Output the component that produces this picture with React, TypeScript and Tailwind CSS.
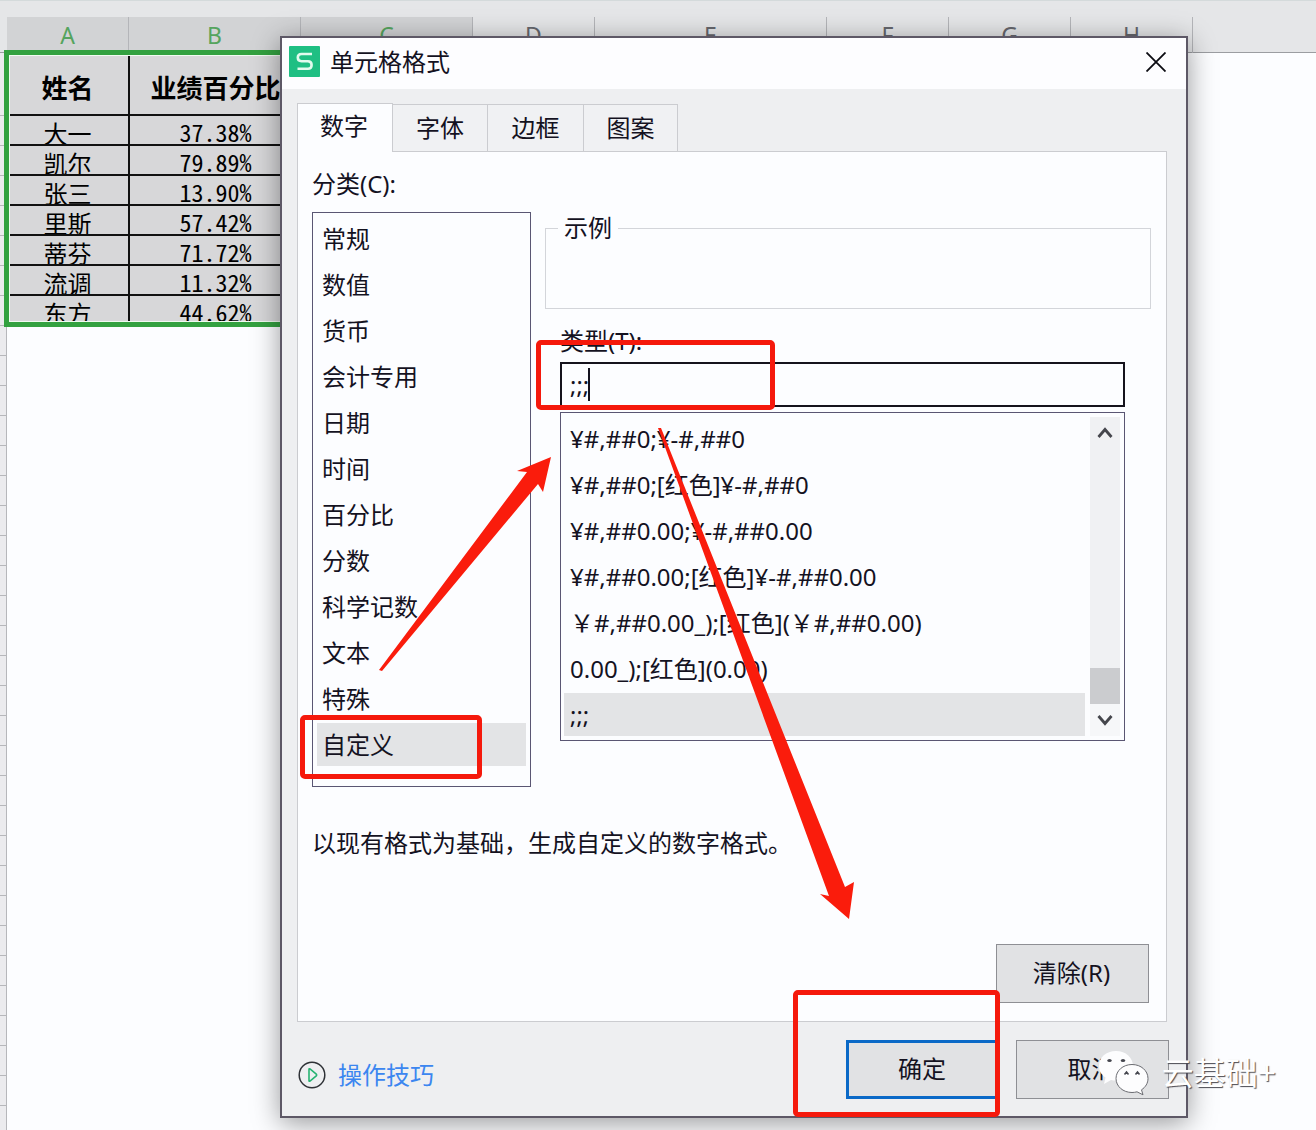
import React, { useState } from 'react';

const COLUMNS = [
  { name: 'A', width: 'w-[122px]', selected: true },
  { name: 'B', width: 'w-[172px]', selected: true },
  { name: 'C', width: 'w-[172px]', selected: true },
  { name: 'D', width: 'w-[122px]', selected: false },
  { name: 'E', width: 'w-[232px]', selected: false },
  { name: 'F', width: 'w-[122px]', selected: false },
  { name: 'G', width: 'w-[122px]', selected: false },
  { name: 'H', width: 'w-[122px]', selected: false },
];

const ROWS = [
  ['大一', '37.38%'],
  ['凯尔', '79.89%'],
  ['张三', '13.90%'],
  ['里斯', '57.42%'],
  ['蒂芬', '71.72%'],
  ['流调', '11.32%'],
  ['东方', '44.62%'],
];

const TABS = [
  { name: '数字', width: 'w-24' },
  { name: '字体', width: 'w-[95px]' },
  { name: '边框', width: 'w-24' },
  { name: '图案', width: 'w-[94px]' },
];

const CATEGORIES = ['常规', '数值', '货币', '会计专用', '日期', '时间', '百分比', '分数', '科学记数', '文本', '特殊', '自定义'];

const FORMATS = [
  '¥#,##0;¥-#,##0',
  '¥#,##0;[红色]¥-#,##0',
  '¥#,##0.00;¥-#,##0.00',
  '¥#,##0.00;[红色]¥-#,##0.00',
  '￥#,##0.00_);[红色](￥#,##0.00)',
  '0.00_);[红色](0.00)',
  ';;;',
];

const LogoIcon: React.FC = () => (
  <svg className="h-[31px] w-[31px] shrink-0" viewBox="0 0 31 31" fill="none">
    <rect width="31" height="31" rx="1" fill="#1fbf83" />
    <path d="M23 8H12.500Q8.800 8 8.800 11.600t3.700 3.600h6.500Q22.600 15.200 22.600 19T19 22.800H8.500" stroke="#e2fbee" strokeWidth="2.600" />
  </svg>
);

const CloseIcon: React.FC = () => (
  <svg className="h-5 w-5" viewBox="0 0 20 20" fill="none" stroke="#0b0b12" strokeWidth="1.800">
    <path d="M0.500 0.500l19 19M19.500 0.500l-19 19" />
  </svg>
);

const PlayIcon: React.FC = () => (
  <svg className="h-7 w-7" viewBox="0 0 28 28" fill="none">
    <circle cx="14" cy="14" r="12.800" stroke="#2e3136" strokeWidth="1.500" />
    <path d="M11 8.500v11q0 1.200 1 .6l6-5q1.300-1.100 0-2.200l-6-5q-1-.6-1 .6z" stroke="#27b372" strokeWidth="1.600" />
  </svg>
);

const ChevronIcon: React.FC<{ down?: boolean }> = ({ down }) => (
  <svg className="h-4 w-4" viewBox="0 0 16 16" fill="none" stroke="#45464c" strokeWidth="2.800">
    <path d={down ? 'M1.500 4L8 11.500 14.500 4' : 'M1.500 12L8 4.500 14.500 12'} />
  </svg>
);

const ChatIcon: React.FC = () => (
  <svg className="h-[46px] w-[52px]" viewBox="0 0 52 46">
    <path d="M18 1C8 1 1 7.500 1 16c0 5 2.500 9 6.500 11.500L6 34l7-4c1.600.4 3.300.6 5 .6 10 0 17-6.500 17-14.600S28 1 18 1z" fill="#fdfdfe" />
    <ellipse cx="11.500" cy="10.500" rx="2.200" ry="1.600" fill="#46474f" />
    <ellipse cx="25" cy="10.500" rx="2.200" ry="1.600" fill="#46474f" />
    <path d="M34 14.500c-9 0-16 6.200-16 14s7 14 16 14c1.800 0 3.500-.3 5-.7l6 3-1.500-5c4-2.600 6.500-6.600 6.500-11.300 0-7.800-7-14-16-14z" fill="#fdfdfe" stroke="#6b6c72" strokeWidth="1" />
    <path d="M26.500 24.500l2-2.500 2 2.500M37.500 24.500l2-2.500 2 2.500" stroke="#46474f" strokeWidth="1.600" fill="none" />
  </svg>
);

const Highlight: React.FC<{ className: string }> = ({ className }) => (
  <span className={`pointer-events-none absolute z-10 rounded-[5px] border-[5px] border-[#f5190c] ${className}`} />
);

const Sheet: React.FC = () => (
  <div className="flex min-h-screen flex-col bg-[#e5e6e8]">
    <div className="flex h-[53px] items-end border-t border-[#d4dadb] pl-[7px] shadow-[inset_0_-1px_0_#9b9da1]">
      {COLUMNS.map((column) => (
        <div
          key={column.name}
          className={`flex h-[36px] shrink-0 items-center justify-center border-r border-[#b4b5b9] text-[23px] leading-none ${column.width} ${
            column.selected ? 'bg-[#d2d3d5] text-[#55a45e]' : 'text-[#66676d]'
          }`}
        >
          {column.name}
        </div>
      ))}
    </div>
    <div className="flex flex-1">
      <div className="flex w-[7px] shrink-0 flex-col border-r border-[#b6b7bb] bg-[#ebebee]">
        <div className="h-[63px] border-b border-[#b6b7bb]" />
        {Array.from({ length: 33 }, (_, i) => (
          <div key={i} className="h-[30px] border-b border-[#b6b7bb]" />
        ))}
      </div>
      <div className="flex-1 bg-[#fcfdff]">
        <table className="w-[466px] table-fixed border-separate border-spacing-0 bg-[#d7d7d9] text-black">
          <colgroup>
            <col className="w-[123px]" />
            <col className="w-[173px]" />
            <col />
          </colgroup>
          <thead>
            <tr className="h-[63px] text-[26px] leading-8">
              <th className="border-r-2 border-b-2 border-[#111] p-0 pt-2 font-bold">姓名</th>
              <th className="border-r-2 border-b-2 border-[#111] p-0 pt-2 font-bold whitespace-nowrap">业绩百分比</th>
              <th className="border-b-2 border-[#111] p-0" />
            </tr>
          </thead>
          <tbody>
            {ROWS.map(([name, percent]) => (
              <tr key={name} className="h-[30px]">
                <td className="border-r-2 border-b-2 border-[#111] p-0 text-center text-2xl">
                  <div className="h-7 overflow-hidden leading-9">{name}</div>
                </td>
                <td className="border-r-2 border-b-2 border-[#111] p-0 text-center font-['Noto_Sans_Mono_CJK_SC','Liberation_Mono',monospace] text-2xl">
                  <div className="h-7 overflow-hidden leading-8">{percent}</div>
                </td>
                <td className="border-b-2 border-[#111] p-0" />
              </tr>
            ))}
          </tbody>
        </table>
      </div>
    </div>
  </div>
);

const App: React.FC = () => {
  const [tab, setTab] = useState('数字');
  const [category, setCategory] = useState('自定义');
  const [format, setFormat] = useState(';;;');

  return (
    <div className="relative overflow-hidden font-['Noto_Sans','Noto_Sans_CJK_SC',sans-serif] text-2xl leading-8 text-[#14121f]">
      <Sheet />
      <div className="pointer-events-none absolute top-[50px] left-1 h-[277px] w-[471px] border-[5px] border-[#33a140] shadow-[inset_0_0_0_1px_#f1fbf1]" />

      <div
        role="dialog"
        aria-labelledby="dialog-title"
        className="absolute top-9 right-32 left-[280px] border-2 border-[#5d5866] bg-[#eeeff1] shadow-[0_5px_26px_rgba(0,0,0,0.4)]"
      >
        <header className="flex h-[51px] items-center bg-[#fdfdff] pb-1 pl-[7px]">
          <LogoIcon />
          <h1 id="dialog-title" className="ml-[10px] flex-1">单元格格式</h1>
          <button type="button" aria-label="关闭" className="flex h-full w-[60px] items-center justify-center">
            <CloseIcon />
          </button>
        </header>

        <div className="pt-[14px] pr-[19px] pl-[15px]">
          <div role="tablist" className="flex h-12 items-end">
            {TABS.map(({ name, width }) => (
              <button
                key={name}
                type="button"
                role="tab"
                aria-selected={tab === name}
                onClick={() => setTab(name)}
                className={`border-[#cbccd0] ${width} ${
                  tab === name ? 'z-10 -mb-px h-[49px] border-t border-r border-l bg-[#fcfdff] pr-[2px] pb-1' : 'h-[47px] border-t border-r bg-[#f0f1f3]'
                }`}
              >
                {name}
              </button>
            ))}
          </div>

          <main className="border border-[#cbccd0] bg-[#fcfdff] pt-4 pr-[15px] pb-[18px] pl-[14px]">
            <p id="category-label">分类(C):</p>
            <div className="mt-3 flex gap-[14px]">
              <div className="relative w-[219px] shrink-0">
                <ul role="listbox" aria-labelledby="category-label" className="border border-[#5a5673] px-1 pt-1 pb-[17px]">
                  {CATEGORIES.map((name) => (
                    <li
                      key={name}
                      role="option"
                      aria-selected={category === name}
                      onClick={() => setCategory(name)}
                      className={`mb-[3px] h-[43px] pl-[5px] leading-[43px] ${category === name ? 'bg-[#e3e4e6]' : ''}`}
                    >
                      {name}
                    </li>
                  ))}
                </ul>
                <Highlight className="right-[49px] bottom-2 -left-3 h-[64px]" />
              </div>

              <div className="flex-1">
                <fieldset className="h-[97px] border border-[#d3d5da]">
                  <legend className="ml-3 px-[6px]">示例</legend>
                </fieldset>
                <div className="mt-4 mr-[26px] ml-[15px]">
                  <label htmlFor="format-type" className="block">类型(T):</label>
                  <div className="relative mt-[5px]">
                    <input
                      id="format-type"
                      type="text"
                      value={format}
                      onChange={(e) => setFormat(e.target.value)}
                      className="block h-[45px] w-full border-2 border-[#15131c] bg-[#fcfdff] pl-2 outline-none"
                    />
                    <span className="absolute top-[6px] left-7 h-[33px] w-[2px] bg-[#14121f]" />
                    <Highlight className="-top-[22px] -left-6 h-[70px] w-[239px]" />
                  </div>
                  <div className="mt-[5px] flex border border-[#5a5673] pt-1 pr-[4px] pb-1 pl-[3px]">
                    <ul role="listbox" aria-label="类型" className="flex-1">
                      {FORMATS.map((item) => (
                        <li
                          key={item}
                          role="option"
                          aria-selected={format === item}
                          onClick={() => setFormat(item)}
                          className={`mb-[3px] h-[43px] pl-[6px] leading-[43px] whitespace-nowrap last:mb-0 ${format === item ? 'bg-[#e3e4e6]' : ''}`}
                        >
                          {item}
                        </li>
                      ))}
                    </ul>
                    <div className="ml-[5px] flex w-[30px] flex-col items-center bg-[#f0f1f3]">
                      <button type="button" aria-label="向上" className="flex h-8 w-full items-center justify-center">
                        <ChevronIcon />
                      </button>
                      <div className="flex-1" />
                      <div className="h-9 w-full bg-[#cbcccf]" />
                      <button type="button" aria-label="向下" className="flex h-8 w-full items-center justify-center bg-[#f6f7f9]">
                        <ChevronIcon down />
                      </button>
                    </div>
                  </div>
                </div>
              </div>
            </div>

            <p className="mt-10">以现有格式为基础，生成自定义的数字格式。</p>
            <div className="mt-[85px] mr-[2px] flex justify-end">
              <button type="button" className="h-[59px] w-[153px] border border-[#8e8f94] bg-[#e1e2e4] pr-[2px] pb-[2px]">清除(R)</button>
            </div>
          </main>
        </div>

        <footer className="flex items-center justify-between pt-[18px] pr-[17px] pb-[17px] pl-4">
          <a href="#tips" className="mt-[10px] flex items-center gap-3 text-[#3b86f0]">
            <PlayIcon />
            操作技巧
          </a>
          <div className="flex gap-4">
            <div className="relative">
              <button type="button" className="h-[59px] w-[154px] border-[3px] border-[#0a69c7] bg-[#e1e2e4] pr-[2px] pb-[2px]">确定</button>
              <Highlight className="-top-[50px] right-0 -bottom-[18px] w-[207px]" />
            </div>
            <button type="button" className="h-[59px] w-[153px] border border-[#8e8f94] bg-[#e1e2e4] pr-[2px] pb-[2px]">取消</button>
          </div>
        </footer>
      </div>

      <svg className="pointer-events-none absolute top-[420px] left-[370px] z-20 h-[510px] w-[500px]" viewBox="370 420 500 510" fill="#fa1c0c">
        <path d="M379 670L527 472 517 471 551 457 543 492 538 484 382 671Z" />
        <path d="M658 428L829 896 820 894 849 919 854 882 845 887 661 428Z" />
      </svg>

      <div className="pointer-events-none absolute right-10 bottom-[34px] z-20 flex items-center gap-3">
        <ChatIcon />
        <span className="text-[32px] text-white [text-shadow:1px_1px_1px_#4a4a52]">云基础+</span>
      </div>
    </div>
  );
};

export default App;
